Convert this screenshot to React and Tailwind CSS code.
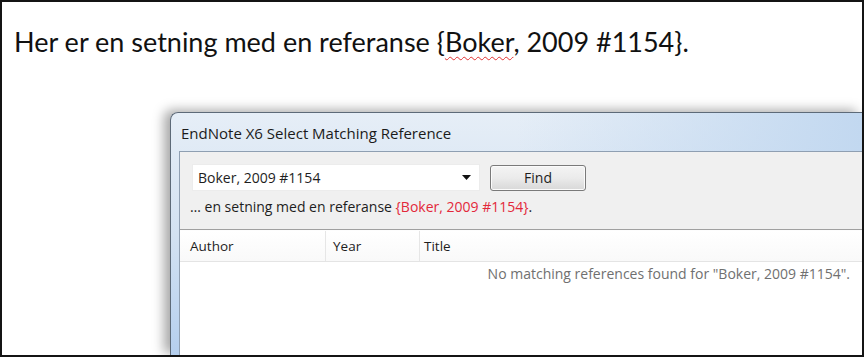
import React from 'react';

const ui = { fontFamily: '"Open Sans", "Noto Sans", sans-serif' };

function ColHead({ label, width, pad, last }) {
  return (
    <div
      className={`h-full flex items-center text-[13.5px] text-[#1e1e1e] ${last ? 'flex-1' : 'border-r border-[#e6e6e6]'}`}
      style={{ width, paddingLeft: pad }}
    >
      {label}
    </div>
  );
}

export default function App() {
  return (
    <div className="w-[864px] h-[357px] bg-white border-2 border-[#141414] overflow-hidden flex flex-col">
      {/* document text */}
      <p
        className="pl-[12px] pt-[22px] h-[110px] text-[27px] leading-[36px] text-[#111] shrink-0"
        style={{ fontFamily: 'Lato, "Noto Sans", sans-serif' }}
      >
        Her er en setning med en referanse {'{'}
        <span className="underline decoration-wavy decoration-[#e03030] decoration-1 underline-offset-4">Boker</span>
        , 2009 #1154{'}'}.
      </p>

      {/* dialog window */}
      <div className="flex-1 flex min-h-0">
        <div className="w-[168px] shrink-0" />
        <div
          className="flex-1 flex flex-col rounded-tl-[8px] border-l border-t border-[#5d6a78] bg-gradient-to-b from-[#e6eef7] via-[#d3e2f2] to-[#b5cfee] shadow-[-6px_-2px_12px_rgba(0,0,0,0.35)]"
          style={ui}
        >
          <div className="h-[38px] shrink-0 flex items-center pl-[10px] pt-[2px] text-[15px] text-[#1b1b1b] bg-gradient-to-r from-transparent via-transparent to-[#c2d8f0]">
            EndNote X6 Select Matching Reference
          </div>
          <div className="flex-1 ml-[8px] border-l border-t border-[#8f9fb2] bg-[#f0f0f0] flex flex-col min-h-0">
            {/* search row */}
            <div className="h-[78px] shrink-0 pl-[12px] pt-[12px] border-b border-[#a0a0a0]">
              <div className="flex items-center gap-[10px]">
                <div className="w-[288px] h-[27px] bg-white border border-[#ececec] flex items-center justify-between pl-[5px] pr-[8px] text-[14px] text-[#1e1e1e]">
                  <span>Boker, 2009 #1154</span>
                  <svg width="9" height="5" viewBox="0 0 9 5">
                    <path d="M0 0h9L4.5 5z" fill="#111" />
                  </svg>
                </div>
                <button className="w-[96px] h-[26px] rounded-[3px] border border-[#7a7a7a] bg-gradient-to-b from-[#f4f4f4] via-[#ebebeb] to-[#d8d8d8] text-[14px] text-[#1e1e1e] shadow-[inset_0_0_0_1px_#fbfbfb]">
                  Find
                </button>
              </div>
              <div className="mt-[7px] text-[14px] text-[#1e1e1e] leading-[18px] -ml-[2px]">
                … en setning med en referanse{' '}
                <span className="text-[#e3283a]">{'{'}Boker, 2009 #1154{'}'}</span>.
              </div>
            </div>
            {/* list */}
            <div className="flex-1 bg-white flex flex-col min-h-0 border-t border-[#fdfdfd]">
              <div className="h-[31px] shrink-0 flex border-b border-[#e4e4e4] bg-gradient-to-b from-white to-[#f9f9f9]">
                <ColHead label="Author" width={146} pad={10} />
                <ColHead label="Year" width={94} pad={7} />
                <ColHead label="Title" pad={4} last />
              </div>
              <div className="pr-[12px] pt-[1px] text-right text-[14px] text-[#707070]">
                No matching references found for "Boker, 2009 #1154".
              </div>
            </div>
          </div>
        </div>
      </div>
    </div>
  );
}
